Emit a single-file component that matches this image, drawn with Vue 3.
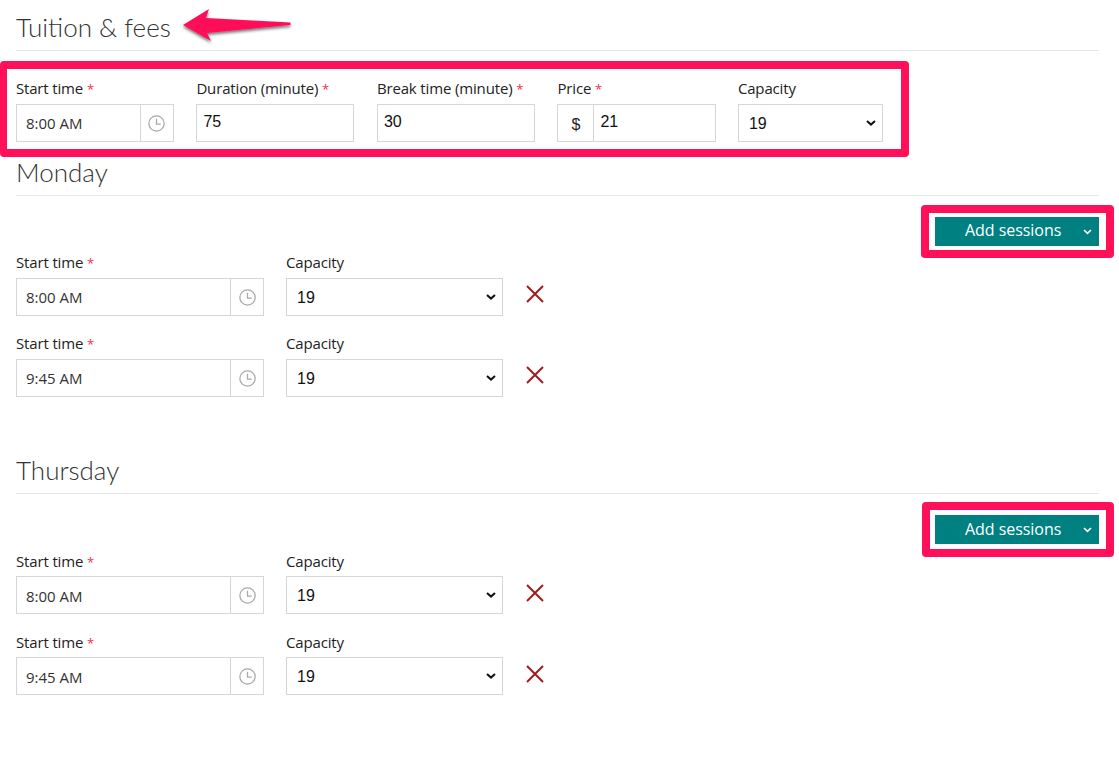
<script setup>
const topFields = [
  { label: 'Duration (minute)', req: true, value: '75' },
  { label: 'Break time (minute)', req: true, value: '30' },
]
const days = [
  { name: 'Monday', cls: 'monday', sessions: ['8:00 AM', '9:45 AM'] },
  { name: 'Thursday', cls: 'thursday', sessions: ['8:00 AM', '9:45 AM'] },
]
</script>

<template>
  <div class="page">
    <svg class="arrow" width="120" height="50" viewBox="0 0 120 50" aria-hidden="true">
      <defs>
        <filter id="arrow-shadow" x="-10%" y="-20%" width="120%" height="160%">
          <feDropShadow dx="0" dy="2" stdDeviation="1.4" flood-color="#000" flood-opacity="0.55" />
        </filter>
      </defs>
      <polygon points="3,25 29,9 26,18 110.5,22.5 110.5,25 27,33 31,41" fill="#ff1059" filter="url(#arrow-shadow)" />
    </svg>

    <h2 class="heading first">Tuition &amp; fees</h2>

    <div class="mark-row">
      <div class="fields">
        <div class="field">
          <div class="label">Start time <span class="req">*</span></div>
          <div class="control">
            <span class="time">8:00 AM</span>
            <span class="addon addon-clock">
              <svg width="17" height="17" viewBox="0 0 16 16" fill="none" stroke="#a9a9a9" stroke-width="1.2"><circle cx="8" cy="8" r="7.2" /><path d="M8 3.6V8.6H12" /></svg>
            </span>
          </div>
        </div>
        <div v-for="f in topFields" :key="f.label" class="field">
          <div class="label">{{ f.label }} <span class="req">*</span></div>
          <div class="control"><span class="num">{{ f.value }}</span></div>
        </div>
        <div class="field">
          <div class="label">Price <span class="req">*</span></div>
          <div class="control price">
            <span class="addon addon-dollar">$</span>
            <span class="num">21</span>
          </div>
        </div>
        <div class="field field-cap">
          <div class="label">Capacity</div>
          <div class="control select">
            <span class="num sel">19</span>
            <svg class="chev" width="10" height="6" viewBox="0 0 10 6" fill="none" stroke="#111" stroke-width="2"><path d="M1 1l4 3.6L9 1" /></svg>
          </div>
        </div>
      </div>
    </div>

    <section v-for="d in days" :key="d.name" :class="['day', d.cls]">
      <h2 class="heading">{{ d.name }}</h2>
      <div class="btn-line">
        <div class="mark-btn">
          <button class="add" type="button">
            <span>Add sessions</span>
            <svg width="9" height="6" viewBox="0 0 9 6" fill="none" stroke="#fff" stroke-width="1.6"><path d="M1 1l3.5 3.4L8 1" /></svg>
          </button>
        </div>
      </div>
      <div class="sessions">
        <div v-for="(s, i) in d.sessions" :key="i" class="session">
          <div class="field w-time">
            <div class="label">Start time <span class="req">*</span></div>
            <div class="control">
              <span class="time">{{ s }}</span>
              <span class="addon addon-clock">
                <svg width="17" height="17" viewBox="0 0 16 16" fill="none" stroke="#a9a9a9" stroke-width="1.2"><circle cx="8" cy="8" r="7.2" /><path d="M8 3.6V8.6H12" /></svg>
              </span>
            </div>
          </div>
          <div class="field w-cap">
            <div class="label">Capacity</div>
            <div class="control select">
              <span class="num sel">19</span>
              <svg class="chev" width="10" height="6" viewBox="0 0 10 6" fill="none" stroke="#111" stroke-width="2"><path d="M1 1l4 3.6L9 1" /></svg>
            </div>
          </div>
          <svg class="remove" width="18" height="18" viewBox="0 0 18 18" fill="none" stroke="#a01c1c" stroke-width="2"><path d="M1 1l16 16M17 1L1 17" /></svg>
        </div>
      </div>
    </section>
  </div>
</template>

<style scoped>
.page {
  position: relative;
  box-sizing: border-box;
  width: 1119px;
  height: 781px;
  padding: 0 20px 0 16px;
  overflow: hidden;
  background: #fff;
  font-family: "Open Sans", "Noto Sans", sans-serif;
  color: #222;
}
.arrow {
  position: absolute;
  left: 180px;
  top: 0;
}
.heading {
  margin: 0;
  box-sizing: border-box;
  height: 39px;
  border-bottom: 1px solid #e6e6e6;
  font-family: Lato, "Open Sans", sans-serif;
  font-weight: 300;
  font-size: 26px;
  line-height: 30px;
  color: #333;
}
.heading.first {
  height: 51px;
  padding-top: 12px;
}
.mark-row {
  box-sizing: border-box;
  width: 909px;
  height: 96px;
  margin: 10px 0 0 -16px;
  padding: 12px 0 0 8.9px;
  border: 8px solid #ff1059;
  border-left-width: 7px;
  border-radius: 4px;
}
.fields {
  display: flex;
  gap: 22.5px;
}
.field {
  width: 158px;
  flex: none;
}
.field-cap {
  width: 145px;
}
.label {
  height: 23px;
  font-size: 15px;
  line-height: 15px;
  color: #222;
  white-space: nowrap;
  letter-spacing: -0.15px;
}
.req {
  color: #f0304a;
  font-size: 13px;
}
.control {
  box-sizing: border-box;
  position: relative;
  display: flex;
  align-items: stretch;
  height: 38px;
  border: 1px solid #d6d6d6;
  background: #fff;
}
.price {
  width: 159px;
}
.time {
  flex: 1;
  padding-left: 9px;
  font-size: 15px;
  line-height: 36px;
  color: #333;
}
.num {
  flex: 1;
  padding-left: 6px;
  font-family: "Liberation Sans", Arial, sans-serif;
  font-size: 16px;
  line-height: 34px;
  color: #111;
}
.sel {
  padding-left: 10px;
  line-height: 37px;
}
.addon {
  display: flex;
  align-items: center;
  justify-content: center;
  flex: none;
}
.addon-clock {
  width: 32px;
  border-left: 1px solid #d6d6d6;
}
.addon-dollar {
  width: 35px;
  padding-top: 3px;
  box-sizing: content-box;
  border-right: 1px solid #d6d6d6;
  font-family: "Liberation Sans", Arial, sans-serif;
  font-size: 16px;
  color: #222;
}
.chev {
  position: absolute;
  right: 6px;
  top: 15px;
}
.btn-line {
  display: flex;
  justify-content: flex-end;
  margin-top: 9px;
  height: 53px;
  margin-right: -15px;
}
.mark-btn {
  box-sizing: border-box;
  width: 193px;
  height: 53px;
  padding: 4px 7px 4px 6px;
  border: 8px solid #ff1059;
  border-radius: 4px;
}
.add {
  display: flex;
  align-items: center;
  box-sizing: border-box;
  width: 164px;
  height: 29px;
  padding: 0 7px 0 30px;
  border: 0;
  background: #008080;
  color: #fff;
  font-family: "Open Sans", sans-serif;
  font-size: 16px;
  letter-spacing: -0.05px;
}
.add span {
  flex: 1;
  text-align: left;
  margin-bottom: 3px;
}
.add svg {
  margin-top: 1px;
}
.sessions {
  display: flex;
  flex-direction: column;
  gap: 20px;
  margin-top: -3px;
}
.session {
  display: flex;
  gap: 22px;
}
.w-time {
  width: 248px;
}
.w-cap {
  width: 217px;
}
.remove {
  align-self: flex-start;
  margin: 30px 0 0 1px;
  flex: none;
}
.thursday {
  margin-top: 58px;
}
.thursday .btn-line {
  height: 55px;
  margin-top: 8px;
}
.thursday .mark-btn {
  width: 192px;
  height: 55px;
  padding: 5px 7px 5px 5px;
}
.thursday .add span {
  margin-bottom: 1px;
}
.thursday .sessions {
  margin-top: -4px;
}
.thursday .label {
  line-height: 17px;
}
.thursday .time {
  line-height: 38px;
}
.thursday .remove {
  margin-top: 31px;
}
</style>
